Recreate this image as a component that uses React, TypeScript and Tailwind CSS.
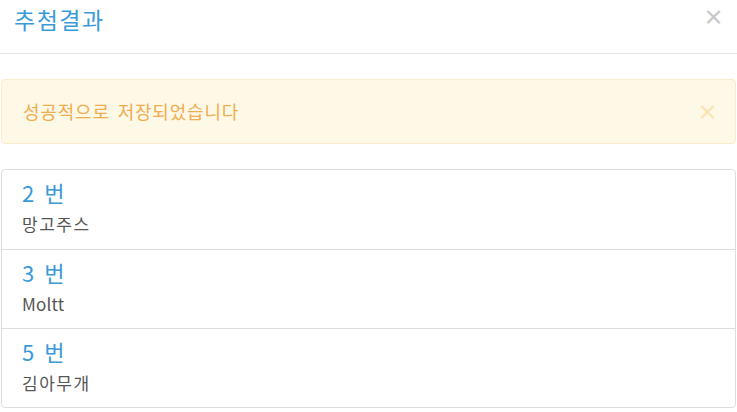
const items = [
  { no: 2, name: '망고주스' },
  { no: 3, name: 'Moltt' },
  { no: 5, name: '김아무개' },
];

const isHangul = (s: string) => /[가-힣]/.test(s);

export default function App() {
  return (
    <div
      className="h-[412px] w-[737px] overflow-hidden bg-white"
      style={{ fontFamily: '"Noto Sans CJK KR", "Noto Sans", sans-serif' }}
    >
      {/* Header */}
      <div className="flex h-[54px] items-start justify-between border-b border-[#e5e5e5] pl-[14px] pr-[13px] pt-[3px]">
        <h4 className="text-[23px] leading-[32px] tracking-[1.5px] text-[#3a9ad9]">추첨결과</h4>
        <button type="button" className="mt-[1px] text-[21px] font-bold leading-[24px] text-[#c8c8c8]">
          ×
        </button>
      </div>

      <div className="px-px pt-[25px]">
        {/* Alert */}
        <div className="flex h-[65px] items-center justify-between rounded-[4px] border border-[#faebcc] bg-[#fef8e7] pl-[21px] pr-[17px]">
          <span className="text-[18px] tracking-[0.8px] [word-spacing:3px] text-[#f0ad4e]">
            성공적으로 저장되었습니다
          </span>
          <span className="text-[21px] font-bold leading-none text-[#fbe3b3]">×</span>
        </div>

        {/* Result list */}
        <div className="mt-[25px] rounded-[4px] border border-[#dddddd]">
          {items.map((it, i) => (
            <div
              key={it.no}
              className={`h-[79px] px-[20px] pt-[7px] ${i > 0 ? 'border-t border-[#dddddd]' : ''}`}
            >
              <div className="text-[22px] leading-[30px] [word-spacing:5px] text-[#3a9ad9]">
                {it.no} 번
              </div>
              <div
                className={`mt-[3px] text-[17px] leading-[28px] text-[#555555] ${isHangul(it.name) ? 'tracking-[1.5px]' : 'tracking-[0.2px]'}`}
              >
                {it.name}
              </div>
            </div>
          ))}
        </div>
      </div>
    </div>
  );
}
